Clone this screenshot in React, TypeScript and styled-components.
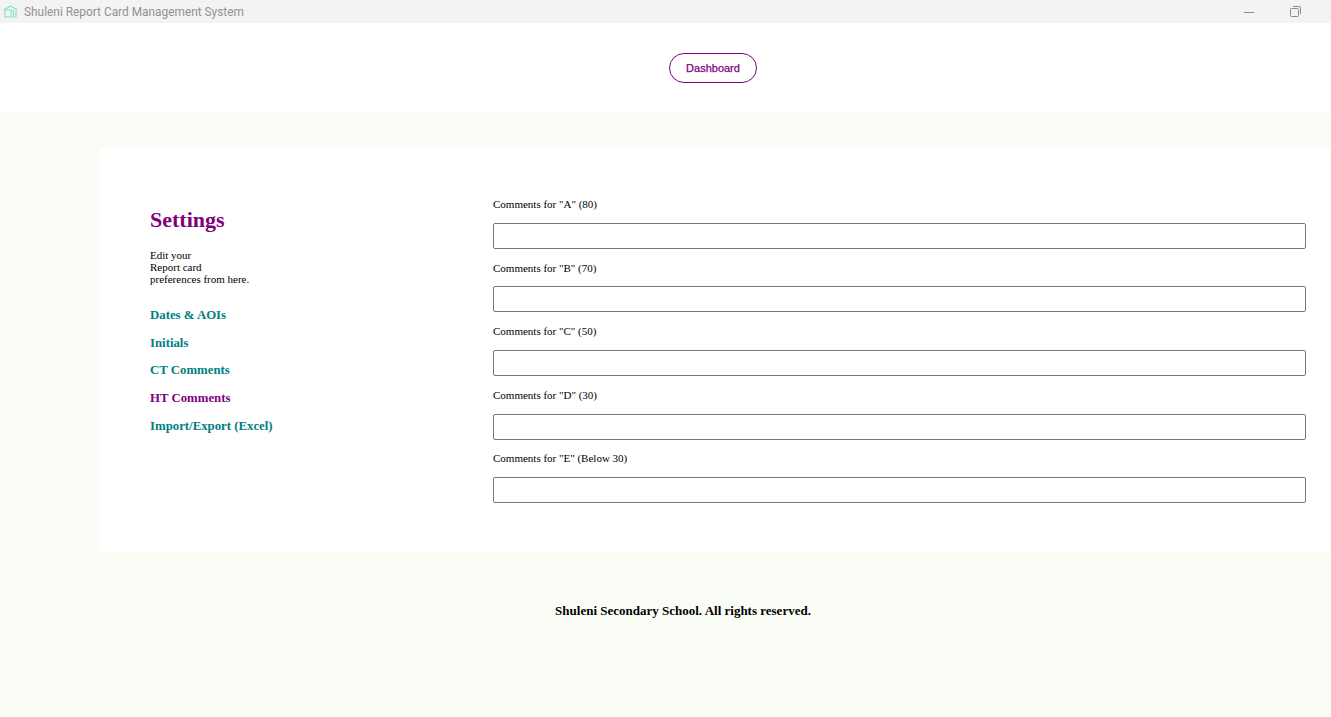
import styled, { createGlobalStyle } from 'styled-components'

const Global = createGlobalStyle`
  html, body {
    margin: 0;
    padding: 0;
    height: 100%;
    overflow: hidden;
    background: #fafdf5;
    font-family: "Liberation Serif", "Times New Roman", serif;
  }
`

const TitleBar = styled.div`
  height: 23px;
  background: #f3f3f3;
  display: flex;
  align-items: center;
  padding: 0 13px 0 3px;
  font-family: Roboto, "Open Sans", sans-serif;
  font-size: 11.88px;
  color: #929292;
`

const AppIcon = styled.svg`
  margin-right: 6px;
`

const TitleText = styled.span`
  flex: 1;
`

const WindowButton = styled.div`
  width: 46px;
  height: 23px;
  display: flex;
  align-items: center;
  justify-content: center;
`

const Header = styled.header`
  height: 90px;
  padding-left: 95px;
  background: #fff;
  display: flex;
  align-items: center;
  justify-content: center;
`

const DashButton = styled.a`
  box-sizing: border-box;
  width: 88px;
  height: 30px;
  border: 1px solid #800080;
  border-radius: 15px;
  display: flex;
  align-items: center;
  justify-content: center;
  color: #800080;
  font-family: "Liberation Sans", Arial, sans-serif;
  font-size: 11px;
  -webkit-text-stroke: 0.25px #800080;
`

const Main = styled.main`
  padding: 35px 0 0 100px;
`

const Card = styled.section`
  height: 405px;
  background: #fff;
  display: flex;
`

const Side = styled.aside`
  box-sizing: border-box;
  width: 393px;
  padding: 59px 0 0 50px;
`

const Heading = styled.h1`
  margin: 0;
  font-size: 22px;
  line-height: 25px;
  font-weight: bold;
  color: #800080;
`

const Intro = styled.p`
  margin: 17px 0 0;
  font-size: 11px;
  line-height: 12px;
  color: #000;
`

const Nav = styled.nav`
  margin-top: 23px;
  display: flex;
  flex-direction: column;
  gap: 12.7px;
`

const NavLink = styled.a<{ $active?: boolean }>`
  font-size: 12.8px;
  line-height: 15px;
  font-weight: bold;
  color: ${p => (p.$active ? '#800080' : '#008080')};
`

const Form = styled.form`
  flex: 1;
  padding: 50px 25px 0 0;
  display: flex;
  flex-direction: column;
`

const Field = styled.div`
  height: 63.6px;
  display: flex;
  flex-direction: column;
`

const Label = styled.label`
  font-size: 11px;
  line-height: 12px;
  color: #000;
`

const Input = styled.input`
  box-sizing: border-box;
  width: 100%;
  height: 26px;
  margin-top: 12.8px;
  border: 1px solid #767676;
  border-radius: 2px;
  background: #fff;
`

const Footer = styled.footer`
  margin-top: 50px;
  padding-left: 35px;
  text-align: center;
  font-size: 13px;
  line-height: 15px;
  font-weight: bold;
  color: #000;
`

const fields = ['Comments for "A" (80)', 'Comments for "B" (70)', 'Comments for "C" (50)', 'Comments for "D" (30)', 'Comments for "E" (Below 30)']
const links = ['Dates & AOIs', 'Initials', 'CT Comments', 'HT Comments', 'Import/Export (Excel)']

export default function App() {
  return (
    <>
      <Global />
      <TitleBar>
        <AppIcon width="15" height="14" viewBox="0 0 15 14" fill="none" stroke="#7fe3c8" strokeWidth="1.1">
          <path d="M.8 5 7.5 1l6.7 4" />
          <path d="M2 5v7h11V5" />
          <path d="M2 5h6v7M8 5l2.500 1v5" />
        </AppIcon>
        <TitleText>Shuleni Report Card Management System</TitleText>
        <WindowButton>
          <svg width="10" height="10" viewBox="0 0 10 10" fill="none" stroke="#8b8b8b">
            <path d="M0 5.500h10" />
          </svg>
        </WindowButton>
        <WindowButton>
          <svg width="11" height="11" viewBox="0 0 11 11" fill="none" stroke="#8b8b8b">
            <rect x="0.5" y="2.5" width="8" height="8" rx="1" />
            <path d="M3 .5h6a1.5 1.5 0 0 1 1.5 1.5v6" />
          </svg>
        </WindowButton>
      </TitleBar>
      <Header>
        <DashButton>Dashboard</DashButton>
      </Header>
      <Main>
        <Card>
          <Side>
            <Heading>Settings</Heading>
            <Intro>
              Edit your
              <br />
              Report card
              <br />
              preferences from here.
            </Intro>
            <Nav>
              {links.map(l => (
                <NavLink key={l} $active={l === 'HT Comments'}>
                  {l}
                </NavLink>
              ))}
            </Nav>
          </Side>
          <Form>
            {fields.map(f => (
              <Field key={f}>
                <Label>{f}</Label>
                <Input type="text" />
              </Field>
            ))}
          </Form>
        </Card>
      </Main>
      <Footer>Shuleni Secondary School. All rights reserved.</Footer>
    </>
  )
}
